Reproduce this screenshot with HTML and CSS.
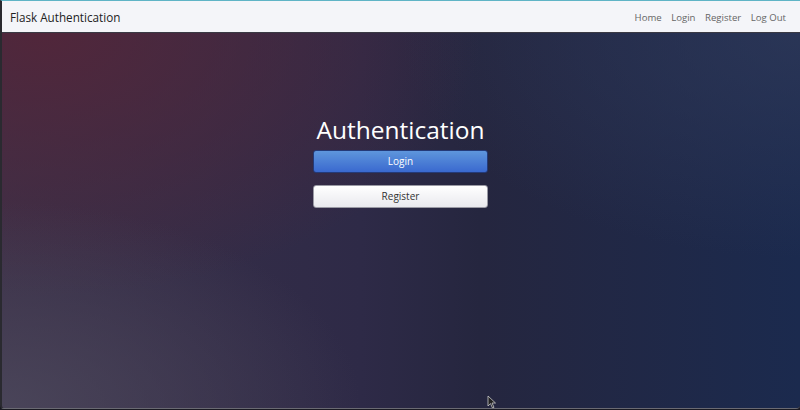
FILE: index.html
```html
<!DOCTYPE html>
<html>
<head>
<meta charset="utf-8">
<link rel="stylesheet" href="styles.css">
</head>
<body>
<div class="window">
  <nav class="navbar">
    <span class="brand">Flask Authentication</span>
    <div class="links">
      <a href="#">Home</a>
      <a href="#">Login</a>
      <a href="#">Register</a>
      <a href="#">Log Out</a>
    </div>
  </nav>
  <main class="hero">
    <div class="box">
      <h1 class="title">Authentication</h1>
      <a class="btn btn-primary" href="#">Login</a>
      <a class="btn btn-light" href="#">Register</a>
    </div>
    <svg class="cursor" width="10" height="14" viewBox="0 0 10 14"><path d="M1 1 L1 11 L3.5 8.6 L5.5 13 L7 12.3 L5 8 L8.5 8 Z" fill="#222" stroke="#ccc" stroke-width="0.8"/></svg>
  </main>
</div>
</body>
</html>
```

FILE: styles.css
```css
html, body {
  margin: 0;
  padding: 0;
  background: #1a1a22;
}
body {
  width: 800px;
  height: 410px;
  overflow: hidden;
  font-family: "Open Sans", "Noto Sans", sans-serif;
}
.window {
  height: 409px;
  display: flex;
  flex-direction: column;
  border-top: 1px solid #5fb4c6;
  border-left: 2px solid #2a2a30;
  border-bottom: 1px solid #6a6a72;
  border-radius: 0 0 4px 4px;
  box-sizing: border-box;
  overflow: hidden;
}
.navbar {
  height: 31px;
  flex: none;
  display: flex;
  align-items: center;
  justify-content: space-between;
  background: #f4f5f9;
  border-bottom: 1px solid #3a3a44;
  padding: 0 14px 0 8px;
}
.brand {
  font-size: 11.7px;
  color: #222;
  padding-top: 1px;
}
.links {
  display: flex;
  gap: 9.5px;
}
.links a {
  font-size: 9.6px;
  color: #666;
  text-decoration: none;
  padding-top: 1px;
}
.hero {
  flex: 1;
  position: relative;
  display: flex;
  justify-content: center;
  background:
    radial-gradient(ellipse 45% 55% at 0% 100%, rgba(76, 72, 92, 0.85), rgba(76, 72, 92, 0) 100%),
    radial-gradient(ellipse 55% 70% at 5% 0%, rgba(82, 38, 58, 0.95), rgba(82, 38, 58, 0) 100%),
    radial-gradient(ellipse 50% 60% at 100% 0%, rgba(48, 58, 90, 0.7), rgba(48, 58, 90, 0) 100%),
    linear-gradient(90deg, #3b3048 0%, #2e2a47 45%, #25263f 60%, #1b2a4e 100%);
}
.box {
  width: 175px;
  display: flex;
  flex-direction: column;
  align-items: stretch;
  padding-top: 81px;
  padding-right: 1px;
}
.title {
  margin: 0 -40px 4px;
  text-align: center;
  font-weight: 400;
  font-size: 24.5px;
  line-height: 32px;
  color: #fff;
}
.btn {
  display: block;
  height: 23px;
  text-align: center;
  font-size: 10px;
  text-decoration: none;
  border-radius: 3px;
  box-sizing: border-box;
  line-height: 21px;
}
.btn-primary {
  color: #fff;
  background: linear-gradient(#5e96dc, #3a69cf);
  border: 1px solid #243a78;
  margin-bottom: 12px;
}
.btn-light {
  color: #333;
  background: linear-gradient(#ffffff, #e9e9ee);
  border: 1px solid #9a9aa4;
}
.cursor {
  position: absolute;
  left: 485px;
  top: 362px;
}
```
